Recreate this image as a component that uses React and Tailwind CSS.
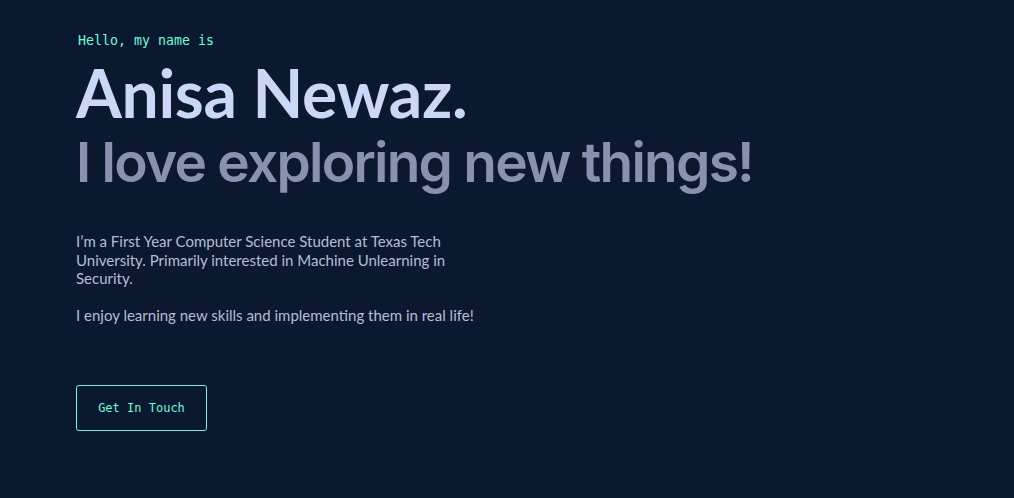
import React from 'react';

const App = () => {
  return (
    <div className="min-h-screen w-full bg-[#0a192f] overflow-hidden">
      <section className="pl-[76px] pt-[33px]">
        <p className="pl-[2px] text-[13.3px] leading-[16px] text-[#64ffda] font-['DejaVu_Sans_Mono',monospace]">
          Hello, my name is
        </p>

        <h1 className="mt-[4px] text-[66px] leading-[80px] font-bold text-[#ccd6f6] font-['Lato',sans-serif] tracking-[-0.3px]">
          Anisa Newaz.
        </h1>

        <h2 className="mt-[-4px] text-[55px] leading-[66px] font-semibold text-[#8892b0] font-['Inter',sans-serif] tracking-[-1.75px]">
          I love exploring new things!
        </h2>

        <div className="mt-[37px] w-[405px] h-[96px] overflow-hidden text-[15px] leading-[18.5px] text-[#b4bdd8] font-['Lato',sans-serif]">
          <p>
            I’m a First Year Computer Science Student at Texas Tech University. Primarily interested in Machine Unlearning in Security.
          </p>
          <br />
          <p>
            I enjoy learning new skills and implementing them in real life! Outside of coding, I love spending time with family and friends.
          </p>
        </div>

        <button className="mt-[57px] w-[131px] h-[46px] border border-[#64ffda] rounded-[3px] text-[12px] text-[#64ffda] font-['DejaVu_Sans_Mono',monospace]">
          Get In Touch
        </button>
      </section>
    </div>
  );
};

export default App;
